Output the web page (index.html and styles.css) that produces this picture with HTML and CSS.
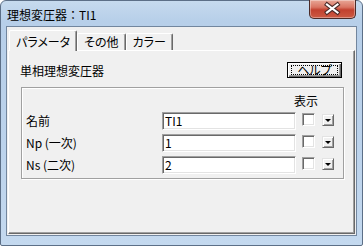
FILE: index.html
```html
<!DOCTYPE html>
<html lang="ja">
<head>
    <meta charset="UTF-8">
    <title>理想変圧器：TI1</title>
    <link rel="stylesheet" href="styles.css">
</head>
<body>
    <div class="window">
        <div class="titlebar">
            <span class="title">理想変圧器：TI1</span>
            <div class="close">
                <svg width="45" height="17" viewBox="0 0 45 17">
                    <path d="M17 4.5 L27.5 12.5 M27.5 4.5 L17 12.5" stroke="#4a2a28" stroke-width="4.2" stroke-linecap="square"/>
                    <path d="M17 4.5 L27.5 12.5 M27.5 4.5 L17 12.5" stroke="#ffffff" stroke-width="2.2" stroke-linecap="square"/>
                </svg>
            </div>
        </div>

        <div class="client">
            <div class="tabs">
                <div class="tab active">パラメータ</div>
                <div class="tab">その他</div>
                <div class="tab">カラー</div>
            </div>

            <div class="panel">
                <div class="panel-head">
                    <span>単相理想変圧器</span>
                    <div class="btn-help"><span class="focus">ヘルプ</span></div>
                </div>

                <div class="group">
                    <div class="col-head">表示</div>

                    <div class="row">
                        <span class="label">名前</span>
                        <div class="field">TI1</div>
                        <span class="check"></span>
                        <span class="drop"></span>
                    </div>
                    <div class="row">
                        <span class="label">Np (一次)</span>
                        <div class="field">1</div>
                        <span class="check"></span>
                        <span class="drop"></span>
                    </div>
                    <div class="row">
                        <span class="label">Ns (二次)</span>
                        <div class="field">2</div>
                        <span class="check"></span>
                        <span class="drop"></span>
                    </div>
                </div>
            </div>
        </div>
    </div>
</body>
</html>
```

FILE: styles.css
```css
* {
    box-sizing: border-box;
}

body {
    margin: 0;
    font-family: "Noto Sans CJK JP", sans-serif;
    font-size: 12px;
    font-feature-settings: "palt";
    color: #000;
}

.window {
    width: 363px;
    height: 246px;
    display: flex;
    flex-direction: column;
    padding: 0 5px 9px 5px;
    border: 1px solid #5c6f87;
    border-radius: 6px 6px 2px 2px;
    background: linear-gradient(to bottom, #c6daee 0, #b7cfe9 20px, #bcd3ec 60%, #c4d9ef 100%);
}

.titlebar {
    height: 25px;
    display: flex;
    align-items: flex-start;
}

.title {
    margin: 6px 0 0 1px;
    line-height: 16px;
    font-feature-settings: normal;
}

.close {
    margin: -1px 1px 0 auto;
    width: 47px;
    height: 19px;
    border: 1px solid #4b2b28;
    border-top: none;
    border-radius: 0 0 5px 5px;
    background: linear-gradient(to bottom, #e8a797 0, #d97563 40%, #c2412f 55%, #cc5a43 100%);
    box-shadow: inset 0 0 0 1px rgba(255, 255, 255, 0.35);
}

.close svg {
    display: block;
}

.client {
    flex: 1;
    display: flex;
    flex-direction: column;
    border: 1px solid #72869e;
    background: #f0f0f0;
    padding: 3px 1px 1px 1px;
}

.tabs {
    height: 20px;
    display: flex;
    align-items: flex-end;
    padding-left: 1px;
}

.tab {
    height: 17px;
    padding: 0 6px;
    line-height: 15px;
    background: #f0f0f0;
    border-top: 1px solid #fff;
    border-left: 1px solid #fff;
    border-right: 1px solid #696969;
    box-shadow: inset -1px 0 0 #a0a0a0;
    border-radius: 2px 2px 0 0;
}

.tab.active {
    position: relative;
    z-index: 1;
    height: 21px;
    margin-bottom: -1px;
    padding: 3px 6px 0 6px;
}

.panel {
    flex: 1;
    border-top: 1px solid #fff;
    border-left: 1px solid #fff;
    border-right: 1px solid #696969;
    border-bottom: 1px solid #696969;
    box-shadow: inset -1px -1px 0 #a0a0a0;
}

.panel-head {
    margin-top: 11px;
    padding: 0 12px 0 11px;
    height: 16px;
    display: flex;
    align-items: center;
    justify-content: space-between;
}

.btn-help {
    width: 55px;
    height: 16px;
    padding: 2px 3px;
    border: 1px solid #000;
    background: #f0f0f0;
    box-shadow: inset 1px 1px 0 #fff, inset -1px -1px 0 #696969, inset -2px -2px 0 #a0a0a0;
}

.focus {
    display: block;
    height: 10px;
    border: 1px dotted #000;
    line-height: 8px;
    text-align: center;
}

.group {
    margin: 9px 10px 0 12px;
    height: 92px;
    padding: 0 4px;
    border: 1px solid #a0a0a0;
    box-shadow: inset 1px 1px 0 #fff, 1px 1px 0 #fff;
}

.col-head {
    margin-top: 5px;
    height: 16px;
    line-height: 16px;
    text-align: right;
    padding-right: 21px;
}

.row {
    display: flex;
    align-items: flex-start;
    height: 18px;
    margin-top: 4px;
}

.col-head + .row {
    margin-top: 3px;
}

.label {
    width: 136px;
    line-height: 18px;
}

.field {
    width: 134px;
    height: 18px;
    padding-left: 2px;
    line-height: 15px;
    background: #fff;
    border: 1px solid;
    border-color: #a0a0a0 #fff #fff #a0a0a0;
    box-shadow: inset 1px 1px 0 #696969, inset -1px -1px 0 #e3e3e3;
}

.check {
    width: 13px;
    height: 13px;
    margin: 1px 0 0 6px;
    background: #fff;
    border: 1px solid;
    border-color: #a0a0a0 #fff #fff #a0a0a0;
    box-shadow: inset 1px 1px 0 #696969, inset -1px -1px 0 #e3e3e3;
}

.drop {
    width: 12px;
    height: 12px;
    margin: 2px 0 0 7px;
    display: flex;
    align-items: center;
    justify-content: center;
    background: #f0f0f0;
    border: 1px solid;
    border-color: #e3e3e3 #696969 #696969 #e3e3e3;
    box-shadow: inset 1px 1px 0 #fff, inset -1px -1px 0 #a0a0a0;
}

.drop::after {
    content: "";
    margin-right: 1px;
    border-left: 3px solid transparent;
    border-right: 3px solid transparent;
    border-top: 3px solid #000;
}
```
